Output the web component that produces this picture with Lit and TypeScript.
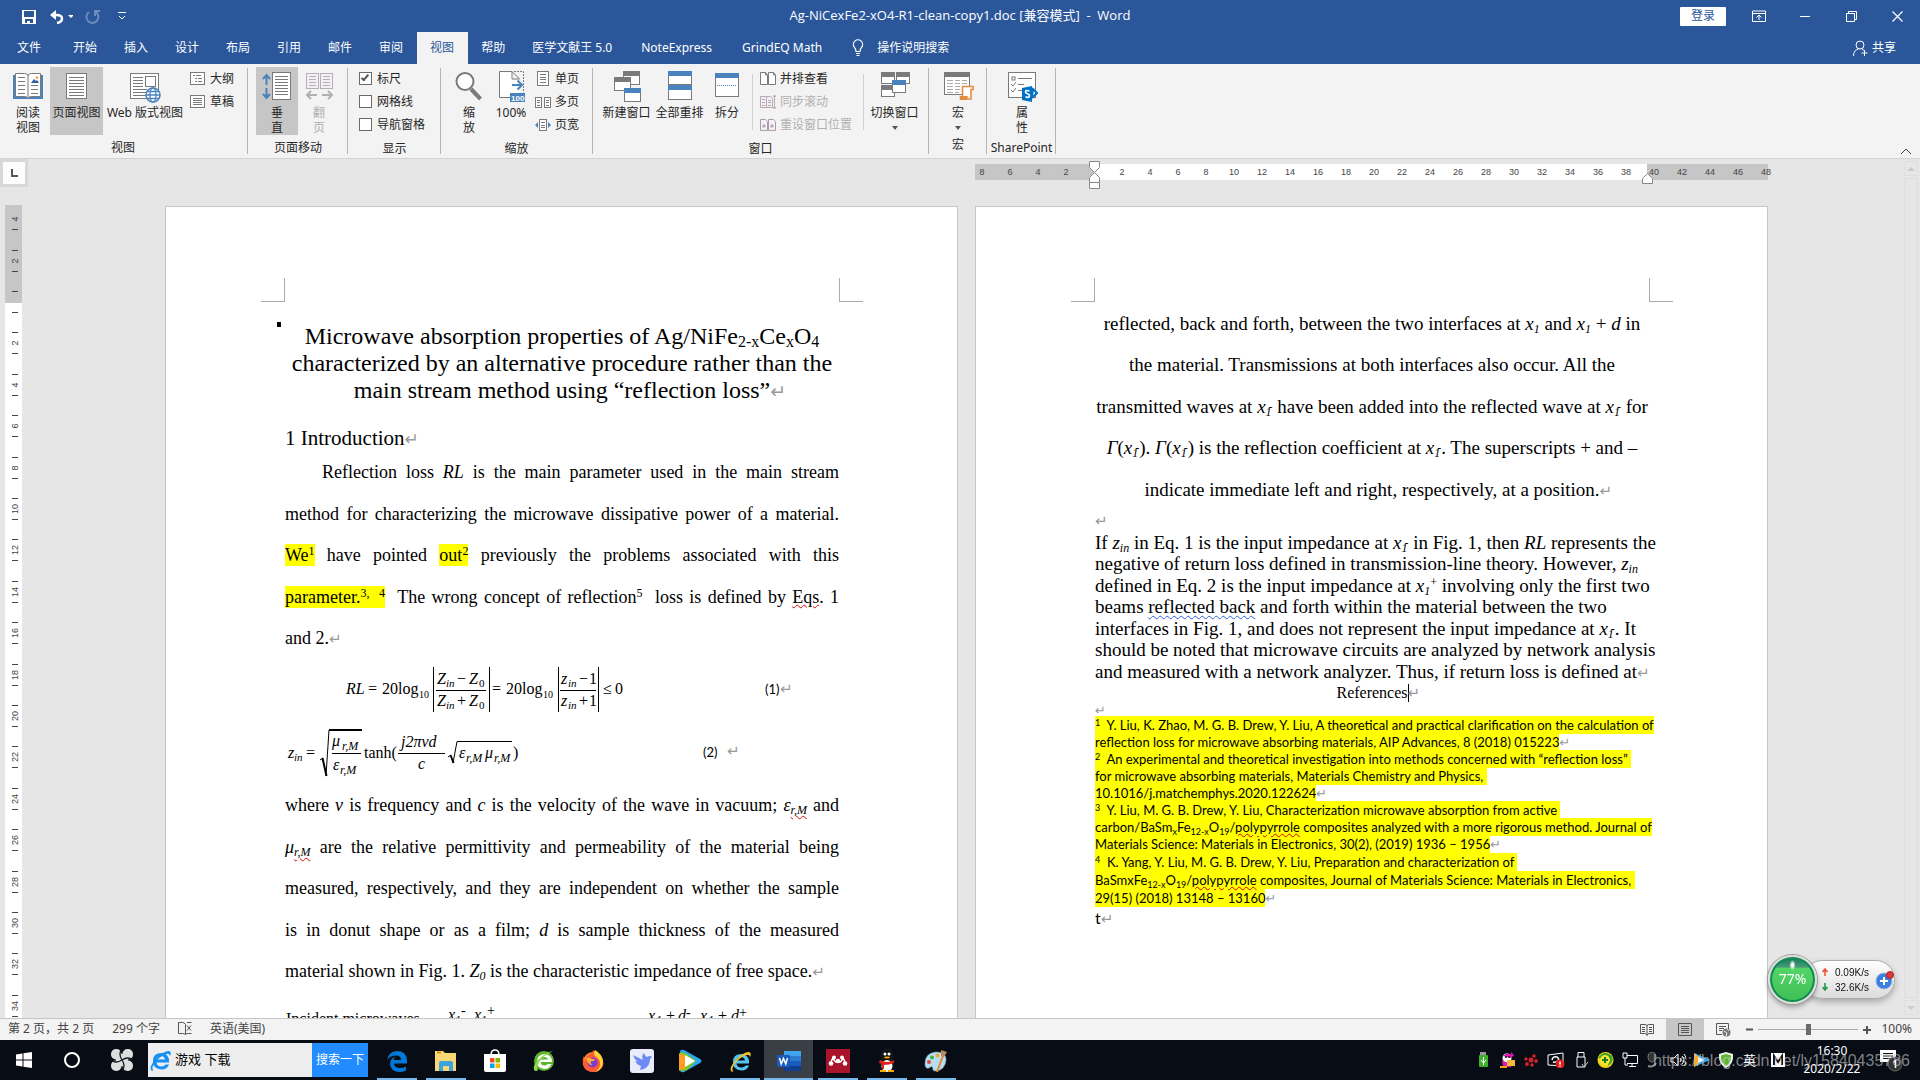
import { LitElement, html, svg, css, nothing, TemplateResult } from "lit";
import { customElement, state } from "lit/decorators.js";
import { classMap } from "lit/directives/class-map.js";

type Tpl = TemplateResult | typeof nothing;

const icon = (w: number, h: number, body: unknown, cls = "") =>
  html`<svg class=${cls} width=${w} height=${h} viewBox="0 0 ${w} ${h}" fill="none" aria-hidden="true">${body}</svg>`;

const G = "#7a7a7a";
const B = "#4a82bd";

/* horizontal text rules inside a sheet icon */
const rules = (x1: number, x2: number, ys: number[], c = G) =>
  svg`${ys.map((y) => svg`<path d="M${x1} ${y}.5H${x2}" stroke=${c} />`)}`;

const windowShape = (x: number, y: number, w: number, h: number, bar: string) =>
  svg`<rect x=${x + 0.5} y=${y + 0.5} width=${w - 1} height=${h - 1} fill="#fff" stroke=${G} /><rect x=${x} y=${y} width=${w} height="5" fill=${bar} />`;

const big = {
  read: icon(32, 32, svg`<path d="M1 4h30v24H1z" fill=${B}/><path d="M3.500 2.500h9q3 0 3.500 2 .5-2 3.500-2h9v23h-9q-3 0-3.500 2-.5-2-3.500-2h-9z" fill="#fff" stroke=${G}/><path d="M16 4v22" stroke=${G}/>${rules(6, 13, [6, 10, 14, 18, 22])}${rules(19, 26, [14, 18, 22])}<path d="M19 5h8v7h-8z" fill="#fff"/><path d="M19 12l3-4 2 2 1-1 2 3z" fill="#2b5f9e"/><circle cx="25" cy="6.500" r="1.500" fill="#f0b060"/>`),
  page: icon(32, 32, svg`<rect x="5.500" y="2.500" width="20" height="25" fill="#fff" stroke=${G}/>${rules(8, 23, [6, 9, 12, 15, 18, 21, 24])}`),
  web: icon(32, 32, svg`<rect x="1.500" y="2.500" width="28" height="25" fill="#fff" stroke=${G}/>${rules(4, 14, [6, 9, 12, 15])}${rules(4, 18, [18, 21, 24])}<rect x="16.500" y="5.500" width="10" height="10" fill="#fff" stroke=${G}/><circle cx="24" cy="24" r="7" fill="#fff" stroke=${B} stroke-width="1.500"/><ellipse cx="24" cy="24" rx="3" ry="7" stroke=${B} stroke-width="1.300"/><path d="M17 24h14M18 20.500h12M18 27.500h12" stroke=${B} stroke-width="1.300"/>`),
  vertical: icon(32, 32, svg`<rect x="11.500" y="1.500" width="18" height="27" fill="#fff" stroke=${G}/>${rules(14, 27, [5, 8, 11, 14, 17, 20, 23])}<path d="M5.500 4v10M5.500 17v10M2 8l3.500-4L9 8M2 23l3.500 4L9 23" stroke=${B} stroke-width="2"/>`),
  flip: icon(32, 32, svg`<rect x="3.500" y="2.500" width="12" height="15" fill="#f5eff5" stroke="#b5b0b5"/><rect x="17.500" y="2.500" width="12" height="15" fill="#f5eff5" stroke="#b5b0b5"/>${rules(6, 13, [5, 8, 11, 14], "#b5b0b5")}${rules(20, 27, [5, 8, 11, 14], "#b5b0b5")}<path d="M5 24h9M19 24h9M8 20l-4 4 4 4M25 20l4 4-4 4" stroke="#b0b0b0" stroke-width="2"/>`),
  zoom: icon(32, 32, svg`<path d="M18 18l9.500 10" stroke=${G} stroke-width="4"/><circle cx="12" cy="10.500" r="8.500" fill="#fff" stroke=${G} stroke-width="2"/>`),
  hundred: icon(32, 32, svg`<path d="M4.500 1.500h13v7h7v18h-20z" fill="#fff"/><path d="M15 26.500H4.500v-26H17v7.500h7.500" stroke=${G}/><path d="M17 .5l7.500 7.500" stroke=${G}/><path d="M19 .5h9.500v21" stroke=${G} stroke-dasharray="2 1"/><path d="M17 14h9M22.500 9.500l4.500 4.500-4.500 4.500" stroke=${B} stroke-width="2"/><rect x="15" y="22" width="15" height="9" fill=${B}/><text x="16" y="29.500" font-size="8" font-weight="700" fill="#fff" font-family="Liberation Sans, sans-serif">100</text>`),
  newWin: icon(32, 32, svg`${windowShape(12, 0, 17, 14, G)}${windowShape(3, 6, 17, 14, G)}${windowShape(13, 17, 17, 14, B)}`),
  arrange: icon(32, 32, svg`${windowShape(4, 0, 24, 14, B)}${windowShape(4, 14, 24, 15, B)}`),
  split: icon(32, 32, svg`${windowShape(4, 2, 24, 24, B)}<path d="M6 14.500h20" stroke=${B} stroke-dasharray="1 1"/>`),
  switchWin: icon(32, 32, svg`${windowShape(2, 1, 14, 12, G)}${windowShape(17, 1, 14, 12, G)}${windowShape(2, 14, 14, 12, G)}${windowShape(13, 9, 14, 13, B)}`),
  macro: icon(32, 32, svg`${windowShape(2, 1, 26, 23, G)}<path d="M5 9.500h6M13 9.500h5M20 9.500h5M5 12.500h6M13 12.500h5M20 12.500h5M5 15.500h6M13 15.500h5M5 18.500h6M13 18.500h5M5 21.500h6M13 21.500h4" stroke="#aaa"/><path d="M20.500 26V15.500H31v3h-2V28H18.500v-2H26" fill="#fff" stroke="#e68a3e" stroke-width="1.600"/><path d="M18 25h7v4h-7z" fill="#e68a3e"/>`),
  prop: icon(32, 32, svg`<rect x="2.500" y="1.500" width="27" height="25" fill="#fff" stroke=${G}/><rect x="6" y="6" width="3" height="3" stroke=${G}/><path d="M12 7.500h14M12 13.500h6M12 19.500h4M5 13l2 2 3-4M5 19l2 2 3-4" stroke=${G}/><path d="M26 17l5 5-5 5M27 18l-1 8" stroke="#0072c6" stroke-width="2"/><path d="M16 17l10-2v16l-10-2z" fill="#0072c6"/><path d="M23.500 20q-4-1.500-4 1 0 1.200 2 1.800t2 2q0 2.500-4 1" stroke="#fff" stroke-width="1.600"/>`),
};

const small = {
  outline: icon(16, 16, svg`<rect x=".5" y="1.500" width="14" height="12" fill="#fff" stroke=${G}/><path d="M3 4.500h2M6 4.500h5M5 7.500h2M8 7.500h4M5 10.500h2M8 10.500h4" stroke=${G}/>`),
  draft: icon(16, 16, svg`<rect x=".5" y="1.500" width="14" height="12" fill="#fff" stroke=${G}/>${rules(3, 12, [4, 6, 8, 10])}`),
  one: icon(16, 16, svg`<rect x="2.500" y=".5" width="11" height="14" fill="#fff" stroke=${G}/>${rules(5, 11, [3, 6, 8, 11])}`),
  many: icon(16, 16, svg`<rect x=".5" y="3.500" width="6" height="10" fill="#fff" stroke=${G}/><rect x="9.500" y="3.500" width="6" height="10" fill="#fff" stroke=${G}/>${rules(2, 5, [6, 8, 11])}${rules(11, 14, [6, 8, 11])}`),
  width: icon(16, 16, svg`<rect x="4.500" y="2.500" width="7" height="11" fill="#fff" stroke=${G}/>${rules(6, 10, [5, 8, 10])}<path d="M3 5v6L0 8zM13 5v6l3-3z" fill=${B}/>`),
  side: icon(16, 16, svg`<path d="M.5 1.500h5l2 2v10h-7zM8.500 1.500h5l2 2v10h-7z" fill="#fff" stroke=${G}/><path d="M5.500 1.500v2.500h2M13.500 1.500v2.500h2" stroke=${G}/>`),
  sync: icon(16, 16, svg`<path d="M.5 2.500h6v11h-6zM6.500 2.500h4l2 2v9h-6z" fill="#f5eff5" stroke="#b5aab5"/>${rules(2, 5, [5, 8, 11], "#b5aab5")}${rules(8, 11, [6, 8, 11], "#b5aab5")}<path d="M14.500 1v14M13 3l1.500-2L16 3M13 13l1.500 2 1.500-2" stroke="#b5aab5"/>`),
  reset: icon(16, 16, svg`<path d="M.5 2.500h5l2 2v9h-7zM8.500 2.500h5l2 2v9h-7z" fill="#f5eff5" stroke="#a89da8"/><path d="M2 9h4M4 7v4M10 9h4M12 7v4" stroke="#a89da8"/>`),
};

const TABS = ["开始", "插入", "设计", "布局", "引用", "邮件", "审阅", "视图", "帮助", "医学文献王 5.0", "NoteExpress", "GrindEQ Math"];

/* document runs */
const ret = html`<span class="ret">↵</span>`;
const sub = (t: string) => html`<sub>${t}</sub>`;
const sup = (t: string) => html`<sup>${t}</sup>`;
const i = (t: string) => html`<i>${t}</i>`;
const x1 = html`<i>x<sub>1</sub></i>`;
const x1m = html`<i>x<sub>1</sub></i><sup class="tuck">-</sup>`;
const zin = html`<i>z<sub>in</sub></i>`;
const rM = html`<i><sub class="err">r,M</sub></i>`;
const ln = (c: unknown, cls = "") => html`<span class="ln ${cls}">${c}</span>`;
const hl = (c: unknown) => html`<mark>${c}</mark>`;

const it = (x: number, y: number, t: string, s = 16) =>
  svg`<text x=${x} y=${y} font-size=${s} font-style="italic">${t}</text>`;
const up = (x: number, y: number, t: string, s = 16) => svg`<text x=${x} y=${y} font-size=${s}>${t}</text>`;

const eq1 = html`<svg class="eq" width="554" height="63" viewBox="0 2 554 63" role="img" aria-label="Equation 1">
  ${it(61, 37, "RL")}${up(83, 37, "=")}${up(97, 37, "20log")}${up(134, 41, "10", 10)}
  <path d="M148.500 10v45M204.500 10v45M151 33.500h50M273.500 10v45M313.500 10v45M275 33.500h36" stroke="#000" />
  ${it(152, 27, "Z")}${it(161, 30, "in", 11)}${up(172, 27, "−")}${it(184, 27, "Z")}${up(194, 30, "0", 11)}
  ${it(152, 49, "Z")}${it(161, 52, "in", 11)}${up(172, 49, "+")}${it(184, 49, "Z")}${up(194, 52, "0", 11)}
  ${up(207, 37, "=")}${up(221, 37, "20log")}${up(258, 41, "10", 10)}
  ${it(276, 27, "z")}${it(283, 30, "in", 11)}${up(294, 27, "−")}${up(304, 27, "1")}
  ${it(276, 49, "z")}${it(283, 52, "in", 11)}${up(294, 49, "+")}${up(304, 49, "1")}
  ${up(318, 37, "≤")}${up(330, 37, "0")}
  <text class="lato" x="480" y="37" font-size="13">(1)</text><text class="mark" x="495" y="37" font-size="13">↵</text>
</svg>`;

const eq2 = html`<svg class="eq" width="554" height="63" viewBox="0 0 554 63" role="img" aria-label="Equation 2">
  ${it(3, 36, "z")}${it(9, 39, "in", 11)}${up(21, 36, "=")}
  <path d="M35 38l3-2M41 54l3-46" stroke="#000" /><path d="M37.500 36l4 18M44 8h33" stroke="#000" stroke-width="2" />
  ${it(47, 24, "μ")}${it(57, 28, "r,M", 12)}${it(48, 48, "ε")}${it(55, 52, "r,M", 12)}
  <path d="M47 31.500h29M113 31.500h47" stroke="#000" />
  ${up(79, 36, "tanh(")}${it(116, 25, "j2πνd")}${it(133, 47, "c")}
  <path d="M163 35l3-2M168 41l4-21.500H227" stroke="#000" /><path d="M165.500 33l3 8" stroke="#000" stroke-width="2" />
  ${it(174, 36, "ε")}${it(181, 40, "r,M", 12)}${it(200, 36, "μ")}${it(209, 40, "r,M", 12)}${up(228, 36, ")")}
  <text class="lato" x="418" y="35" font-size="13">(2)</text><text class="mark" x="442" y="34" font-size="17">↵</text>
</svg>`;

const figure = html`<svg class="eq" width="554" height="80" viewBox="0 0 554 80" role="img" aria-label="Figure 1">
  ${up(1, 32, "Incident microwaves")}
  ${it(163, 28, "x")}${it(170, 32, "1", 12)}${up(176, 23, "-", 14)}${it(189, 28, "x")}${it(196, 32, "1", 12)}${up(202, 23, "+", 14)}
  ${it(363, 29, "x")}${it(371, 32, "1", 12)}${up(381, 29, "+")}${it(393, 29, "d")}${up(401, 25, "-", 14)}
  ${it(415, 29, "x")}${it(423, 32, "1", 12)}${up(433, 29, "+")}${it(446, 29, "d")}${up(454, 25, "+", 14)}
</svg>`;

/* taskbar pictures */
const ieShape = (ring: string, body: string) => svg`<path d="M21 14.500H8.500q.5 4 5 4 3 0 4-2h3.500q-2 5-7.500 5Q5 21 5 13t8.500-8q8 .5 7.500 9.500zM8.500 11.500h8.500q-.5-3.500-4-3.500t-4.500 3.500z" fill=${body}/><path d="M3 22q-2-3 4-10 8-9 14-9 3 1 1 5-.5-3.500-5-1.500Q10 9.500 6 16q-3 5-.5 6-1.500 1.500-2.500 0z" fill=${ring}/>`;

const apps: { name: string; pic: Tpl; open?: boolean; active?: boolean }[] = [
  { name: "Edge", open: true, pic: icon(24, 24, svg`<path d="M2 11Q4 2 12.500 2 22 2.500 22 12v2.500H9q.5 4.500 6 4.500 3.500 0 6-1.500v4Q18 23 14 23 5.500 22.500 5 14.500 5.500 9 11 7.500 8.500 9 8.500 11h7.500q0-4.500-5-4.500Q5 6.500 2 11z" fill="#0078d7"/>`) },
  { name: "Explorer", open: true, pic: icon(24, 24, svg`<path d="M1 2h8l2 2h11v18H1z" fill="#f8d775"/><path d="M3 3.500h4" stroke="#d08a20" stroke-width="2"/><path d="M5 22v-8q0-2 2-2h10q2 0 2 2v8h-4v-5H9v5z" fill="#3ba4e0"/>`) },
  { name: "Store", pic: icon(24, 24, svg`<path d="M8 6q0-5 4-5t4 5" stroke="#fff" stroke-width="1.500"/><path d="M1 5h22v16q0 2-2 2H3q-2 0-2-2z" fill="#fff"/><path d="M7 9h4.500v4.500H7z" fill="#f25022"/><path d="M12.500 9H17v4.500h-4.500z" fill="#7fba00"/><path d="M7 14.500h4.500V19H7z" fill="#00a4ef"/><path d="M12.500 14.500H17V19h-4.500z" fill="#ffb900"/>`) },
  { name: "360", pic: icon(24, 24, svg`<circle cx="12" cy="12" r="10" fill="#5cb52a"/><path d="M20 13H8.500q.5 3.500 4 3.500 2 0 3-1.500h4q-2 5-7 5Q5 19.500 5 12.500T12.500 5Q20 5.500 20 13zM8.500 10.500H16Q15.500 8 12.500 8t-4 2.500z" fill="#fff"/><path d="M2 21Q0 16 9 8q8-6 12-6-9 4-13 10-4 5-2 9-2 2-4 0z" fill="#8edb4a"/>`) },
  { name: "Firefox", pic: icon(24, 24, svg`<circle cx="12" cy="13" r="10" fill="#ff9a1f"/><path d="M3 7q0 4 1 6 0-7 5-8 3-3 4-4 0 3 4 5 7 5 5 11-3 6-10 6-8 0-10-7Q1 10 3 7z" fill="#ff5a36"/><path d="M14 1q7 4 8 11 0 9-8 11 6-4 5-10-1-4-5-6-2-3 0-6z" fill="#ffd43a"/><circle cx="11.500" cy="13.500" r="5" fill="#7a3bd0"/><path d="M5 9q4-1 6 1 3 0 3 1-2 2-4 1-1 3 2 4-5 1-7-7z" fill="#ffb02e"/>`) },
  { name: "Bird", pic: icon(24, 24, svg`<rect width="24" height="24" rx="3" fill="#e9ecfb"/><path d="M3 6l10 5q-2-4 1-7 1 3 3 4 3-2 5 0l-2 2q0 7-6 10l-4 1 1-4q-4-1-6-5l3 1Q4 10 3 6z" fill="#6c8af2"/>`) },
  { name: "Player", pic: icon(24, 24, svg`<path d="M1 3q0-3 4-2l16 9q3 2 0 4L5 23q-4 1-4-2z" fill="#2aa7f5"/><path d="M1 4q3-2 8 2l7 5q1 1 0 2l-8 8q-4 2-7 0z" fill="#82c91e"/><path d="M0 4l6 3v12l-6 3z" fill="#ff9d1e"/><path d="M6 6l10 6-10 6z" fill="#fff"/>`) },
  { name: "Internet Explorer", open: true, pic: icon(24, 24, ieShape("#f5c52c", "#55c5f0")) },
  { name: "Word", open: true, active: true, pic: icon(26, 24, svg`<path d="M8 2h17v5H8z" fill="#41a5ee"/><path d="M8 7h17v5H8z" fill="#2b7cd3"/><path d="M8 12h17v5H8z" fill="#185abd"/><path d="M8 17h17v5H8z" fill="#103f91"/><rect x="1" y="6" width="13" height="12" rx="1" fill="#185abd"/><path d="M3.500 9l1.700 6L7.500 9.500 9.800 15l1.700-6" stroke="#fff" stroke-width="1.500"/>`) },
  { name: "Mendeley", open: true, pic: icon(24, 24, svg`<path d="M0 0h24v24H0z" fill="#a9142c"/><path d="M5 15q0-4 2-6 2 5 5 4 3 1 5-4 2 2 2 6" stroke="#fff" stroke-width="1.600"/><circle cx="8" cy="8.500" r="2" fill="#fff"/><circle cx="12" cy="12" r="2.300" fill="#fff"/><circle cx="16" cy="8.500" r="2" fill="#fff"/><circle cx="5" cy="14.500" r="2.300" fill="#fff"/><circle cx="19" cy="14.500" r="2.300" fill="#fff"/>`) },
  { name: "QQ", open: true, pic: icon(24, 24, svg`<ellipse cx="12" cy="13" rx="8" ry="9" fill="#111"/><ellipse cx="12" cy="6" rx="5.500" ry="6" fill="#111" stroke="#333" stroke-width=".5"/><ellipse cx="12" cy="17" rx="5.500" ry="6" fill="#fff"/><path d="M5 11q7 4 14 0v3q-5 2-10 2v4H7v-5l-3-1z" fill="#e2231a"/><circle cx="10" cy="5" r="1.500" fill="#fff"/><circle cx="14" cy="5" r="1.500" fill="#fff"/><ellipse cx="12" cy="8.500" rx="3" ry="1" fill="#f6a800"/><path d="M5 22h6M13 22h6" stroke="#f6a800" stroke-width="2"/>`) },
  { name: "Paint", open: true, pic: icon(24, 24, svg`<path d="M1 15Q1 4 12 3q10 0 10 8-1 10-10 11-4 0-3-3-1-3-4 0-4 1-4-4z" fill="#b9ddf0" stroke="#7fb2cc" stroke-width=".6"/><circle cx="5" cy="13" r="2" fill="#e04a3a"/><circle cx="8" cy="8.500" r="2" fill="#3fae49"/><circle cx="13.500" cy="6.500" r="2" fill="#f3a32b"/><path d="M20 4l-7 19" stroke="#e08a2c" stroke-width="2"/><path d="M17 1l6 2-3 5-3-1z" fill="#b98a5c"/>`) },
];

const tray: Tpl[] = [
  icon(16, 16, svg`<path d="M5 0h6v4H5z" fill="#999"/><rect x="4" y="3" width="9" height="12" rx="1" fill="#3fae2a"/><path d="M8.500 5v8M6 8l2.500 3L11 8" stroke="#fff"/>`),
  icon(16, 16, svg`<circle cx="8" cy="6" r="4.500" fill="#fff"/><path d="M4 4q4-4 8-1v-3l3 3-3 3z" fill="#e615b8"/><path d="M3 8q5 4 10 1l-1 6H4z" fill="#e615b8"/><rect x="8" y="8" width="8" height="6" fill="#f6b93b"/><path d="M1 15h7" stroke="#f6a800" stroke-width="2"/><circle cx="7" cy="5" r="1" fill="#111"/><circle cx="10" cy="5" r="1" fill="#111"/>`),
  icon(16, 16, svg`<g fill="#d3222a"><circle cx="8" cy="8" r="2.500"/><circle cx="3" cy="7" r="1.700"/><circle cx="11" cy="4" r="1.800"/><circle cx="13" cy="9" r="1.900"/><circle cx="4" cy="12" r="2"/><circle cx="9" cy="13" r="1.800"/></g>`),
  icon(18, 16, svg`<path d="M1 3l15-2v13l-15-1z" stroke="#fff"/><path d="M5 8q1-4 5-3l2 2M12 7q-2 4-6 3" stroke="#fff" stroke-width="1.400"/><circle cx="13" cy="12" r="4.500" fill="#e02020"/><path d="M13 9.500v3M13 13.500v1.200" stroke="#fff" stroke-width="1.500"/>`),
  icon(16, 16, svg`<path d="M5 5V.5h6V5" stroke="#fff"/><path d="M4 5h8v10H4z" stroke="#fff"/><path d="M9 12l2 3 4-5" stroke="#ccc"/>`),
  icon(17, 16, svg`<circle cx="8.500" cy="8" r="8" fill="#f2d31b"/><path d="M1 6q6-9 14-2 2 6-4 10 2-8-10-8z" fill="#35a02a"/><circle cx="8" cy="8" r="5" fill="#f7e23a"/><path d="M8 5v6M5 8h6" stroke="#1d7a1d" stroke-width="2"/>`),
  icon(16, 16, svg`<path d="M1 1h4v5H1zM3 6v7h3M5 3.500h10.500v8H5M10 12v2.500M7 14.500h7" stroke="#fff"/>`),
  icon(16, 16, svg`<ellipse cx="6" cy="5" rx="4" ry="5" fill="#333" stroke="#777"/><path d="M2 14q5 2 8-3" stroke="#888" stroke-width="2"/>`),
  icon(16, 16, svg`<path d="M1 6h3l4-4v12l-4-4H1zM10 6q2 2 0 4M12 4q4 4 0 8M14 2q5 6 0 12" stroke="#fff"/>`),
  icon(16, 16, svg`<path d="M0 1l16 7-16 7z" fill="#2aa7f5"/><path d="M0 1l9 7-9 7z" fill="#f9a825"/><path d="M4 5l6 3-6 3z" fill="#fff"/>`),
  icon(16, 16, svg`<path d="M8 0l7 2q1 10-7 14Q0 12 1 2z" fill="#eef5ea"/><path d="M8 2l5 1.500Q13.500 11 8 14 2.500 11 3 3.500z" fill="#5cb52a"/>`),
];

@customElement("app-root")
export class AppRoot extends LitElement {
  @state() private tab = "视图";

  static styles = css`
    :host { display: flex; flex-direction: column; height: 100vh; overflow: hidden; background: #e6e6e6; color: #262626;
      font: 12px/16px "Noto Sans", "Noto Sans CJK SC", sans-serif; }
    *, *::before { box-sizing: border-box; }
    button { font: inherit; color: inherit; background: none; border: 0; padding: 0; margin: 0; white-space: nowrap; }
    svg { display: block; flex: none; }
    .row { display: flex; align-items: center; }

    .titlebar { display: grid; grid-template-columns: 1fr auto 1fr; align-items: center; height: 32px; background: #2b579a; color: #fff; }
    .qat { gap: 10px; padding: 2px 0 0 21px; }
    .doc-name { white-space: pre; padding-bottom: 3px; font: 13px/18px "Open Sans", "Noto Sans CJK SC", sans-serif; }
    .win { justify-content: flex-end; }
    .win .sys { width: 46px; height: 30px; display: grid; place-items: center; }
    .login { width: 46px; height: 19px; margin-right: 10px; background: #fff; color: #2b579a; border-radius: 1px; }

    .tabs { height: 32px; background: #2b579a; color: #fff; }
    .tabs .tab { height: 32px; padding: 0 14px 0 13px; }
    .tabs .tab:nth-of-type(n + 12) { padding: 0 15px; }
    .tabs .file { width: 60px; padding: 0 2px 0 0; }
    .tabs .tab.on { background: #f3f3f3; color: #2b579a; }
    .tell { gap: 13px; padding: 0 0 0 15px; }
    .share { gap: 4px; margin-left: auto; padding: 0 24px 0 0; }

    .ribbon { display: flex; height: 95px; padding-top: 3px; background: #f3f3f3; border-bottom: 1px solid #d2d2d2; }
    .group { position: relative; display: flex; flex-direction: column; }
    .group::after { content: ""; position: absolute; right: 0; top: 1px; height: 86px; width: 1px; background: #b5b5b5; }
    .tools { display: flex; height: 69px; }
    .label { flex: 1; text-align: center; line-height: 26px; }
    .g-view { width: 248px; padding-left: 6px; } .g-move { width: 100px; padding-left: 8px; } .g-show { width: 93px; }
    .g-zoom { width: 152px; padding-left: 7px; } .g-window { width: 336px; padding-left: 7px; }
    .g-macro { width: 58px; padding-left: 8px; } .g-share { width: 69px; padding-left: 14px; }
    .g-view .label, .g-move .label, .g-zoom .label, .g-macro .label, .g-window .label { margin-left: -8px; }
    .g-share .label { margin-left: -14px; }
    .big { display: flex; flex-direction: column; align-items: center; gap: 2px; padding-top: 4px; line-height: 15px; text-align: center; min-width: 42px; }
    .big.on { background: #c6c6c6; }
    .w44 { width: 44px; } .w53 { width: 53px; } .w84 { width: 84px; }
    .off { color: #b0b0b0; }
    .drop { border: 3px solid transparent; border-top: 4px solid #555; border-bottom: 0; margin-top: 4px; }
    .stack { display: flex; flex-direction: column; padding-left: 3px; }
    .stack .small, .check { display: flex; align-items: center; gap: 4px; height: 23px; text-align: left; }
    .check { gap: 5px; padding-left: 11px; white-space: nowrap; }
    .check input { appearance: none; width: 13px; height: 13px; margin: 0; border: 1px solid #6a6a6a; background: #fff; }
    .check input:checked { position: relative; }
    .check input:checked::before { content: ""; position: absolute; left: 3px; top: 0; width: 4px; height: 8px; border: solid #555; border-width: 0 2px 2px 0; transform: rotate(40deg); }
    .vsep { width: 1px; height: 56px; margin: 7px 4px 0; background: #d0d0d0; }
    .vsep.far { margin-left: 11px; }
    .collapse { margin: auto 8px 0 auto; padding-bottom: 3px; }

    .work { flex: 1; min-height: 0; display: grid; grid-template: 46px 1fr / 26px 1fr 16px; }
    .corner { width: 28px; height: 28px; padding: 3px; background: #d8d8d8; }
    .corner button { display: grid; place-items: center; width: 22px; height: 22px; background: #fdfdfd; }
    .spread { display: grid; grid-template-columns: repeat(2, 793px); gap: 17px; justify-content: center; padding-left: 3px; min-height: 0; }
    .hruler { position: relative; grid-column: 2; display: flex; align-self: start; margin-top: 5px; height: 16px; background: linear-gradient(90deg, #c6c6c6 120px, #fff 120px 672px, #c6c6c6 672px); font: 9px/17px "Liberation Sans", sans-serif; color: #444; }
    .hruler .nums { display: flex; margin-left: -7px; }
    .hruler .nums span { width: 28px; flex: none; text-align: center; }
    .pin { position: absolute; top: -3px; left: 114px; } .pin.right { left: 667px; top: 9px; }
    .vruler { padding-left: 5px; overflow: hidden; }
    .vruler text { font: 9px "Liberation Sans", sans-serif; fill: #444; }
    .scroll { display: flex; flex-direction: column; gap: 2px; padding: 2px 2px 3px 0; grid-row: 1 / 3; grid-column: 3; }
    .scroll div { flex: 1; border: 1px solid #dedede; }
    .scroll button { height: 15px; border: 1px solid #dedede; display: grid; place-items: center; }

    .page { position: relative; min-width: 0; overflow: hidden; margin-top: 1px; background: #fff; border: 1px solid #c6c6c6; border-bottom: 0; padding: 96px 118px 0 119px;
      font-family: "Liberation Serif", "Noto Sans CJK SC", serif; color: #000; }
    .crop { position: absolute; top: 71px; width: 24px; height: 24px; border-bottom: 1px solid #aaa; }
    .crop.l { left: 95px; border-right: 1px solid #aaa; } .crop.r { right: 94px; border-left: 1px solid #aaa; }
    .page p, .page h1, .page h2 { margin: 0; font-weight: 400; }
    .ln { display: block; white-space: nowrap; }
    .title { position: relative; padding-top: 20px; font-size: 24px; line-height: 27px; text-align: center; }
    .title::before { content: ""; position: absolute; left: -8px; top: 19px; width: 4px; height: 5px; background: #000; }
    .h2 { padding: 23px 0 3px; font-size: 21px; line-height: 22px; }
    .body { font-size: 18px; line-height: 41px; } .body .ln:nth-child(even) { line-height: 42px; }
    .just { text-align-last: justify; }
    .ind { padding-left: 37px; }
    .mid { text-align: center; font-size: 19px; }
    .compact { font-size: 19px; line-height: 21px; } .compact .ln:nth-child(even) { line-height: 22px; }
    .refhead { font-size: 16px; line-height: 22px; text-align: center; }
    .caret { display: inline-block; width: 1px; height: 18px; margin: 0 -1px 0 0; background: #000; vertical-align: -4px; }
    .refs { font: 13px/17px Lato, "Noto Sans CJK SC", sans-serif; }
    .refs .ln:nth-child(n + 9) { line-height: 18px; }
    .refs mark { padding: 1px 0; }
    .tail { font: 16px/22px Lato, sans-serif; }
    .blank { font-size: 16px; line-height: 22px; } .blank.s { font-size: 13px; line-height: 13px; }
    sub, sup { font-size: 12px; line-height: 0; } sub { vertical-align: -3px; } sup { vertical-align: 6px; }
    .title sub { font-size: 16px; }
    .refs sub, .refs sup { font-size: 9px; } .refs sup { vertical-align: 4px; }
    .tuck { vertical-align: 2px; margin-left: -3px; }
    mark { background: #ff0; color: inherit; }
    .body mark { padding: 1px 0; }
    .err { text-decoration: underline wavy #e00000 1px; text-underline-offset: 1px; }
    .refs .err { position: relative; z-index: 1; }
    .gram { text-decoration: underline wavy #3060d8 1px; text-underline-offset: 2px; }
    .ret, .mark { color: #999; fill: #999; font-family: "DejaVu Sans", sans-serif; font-size: 15px; line-height: 0; }
    .ret { display: inline-block; width: 0; text-align-last: left; }
    .title .ret { font-size: 19px; } .h2 .ret { font-size: 17px; } .refs .ret, .blank.s .ret { font-size: 13px; }
    .eq { font-family: "Liberation Serif", serif; fill: #000; } .eq path { fill: none; } .eq .lato { font-family: Lato, sans-serif; }

    .status { height: 22px; flex: none; background: #f3f3f3; border-top: 1px solid #c6c6c6; padding: 0 8px 0 8px; color: #444; }
    .status .left { gap: 18px; white-space: nowrap; padding-bottom: 2px; }
    .status .right { margin-left: auto; }
    .status .right button { width: 38px; height: 21px; display: grid; place-items: center; }
    .status .right .on { background: #c6c6c6; }
    .status .right .step { width: 15px; }
    .range { appearance: none; width: 100px; height: 20px; margin: 0 1px; background: linear-gradient(#aaa 0 0) center / 100% 1px no-repeat; }
    .range::-webkit-slider-thumb { appearance: none; width: 5px; height: 11px; background: #6b6b6b; }
    .pct { width: 38px; text-align: right; font-size: 12px; padding-bottom: 1px; }

    .taskbar { position: relative; height: 40px; flex: none; background: #070c15; color: #fff; }
    .taskbar button { display: grid; place-items: center; }
    .start { width: 48px; height: 40px; margin-right: 1px; }
    .search { display: flex; align-items: center; width: 220px; height: 34px; margin: 0 4px 0 1px; background: #ededed; }
    .search input { flex: 1; min-width: 0; height: 30px; border: 0; background: none; padding: 0 0 4px 3px; font: 13px "Noto Sans", "Noto Sans CJK SC", sans-serif; color: #000; outline: 0; }
    .search button { width: 56px; height: 34px; background: #218bff; font-size: 12px; }
    .app { width: 49px; height: 40px; padding-top: 1px; }
    .app.open { background: linear-gradient(#76b9ed 0 0) center bottom / 40px 2px no-repeat; }
    .app.active { background: linear-gradient(#76b9ed 0 0) center bottom / 49px 2px no-repeat, #3a3f46; }
    .tray { margin-left: auto; padding-right: 10px; }
    .icons { gap: 8px; }
    .ime { gap: 15px; margin-left: 9px; font-size: 13px; }
    .clock { width: 76px; margin-left: 9px; text-align: center; line-height: 18px; }
    .notif { width: 40px; }
    .water { position: absolute; right: 10px; top: 11px; font: 16px/20px "Liberation Sans", sans-serif; color: rgba(205, 205, 205, 0.62); white-space: nowrap; }

    .meter { position: fixed; right: 25px; bottom: 76px; display: flex; align-items: center; width: 127px; height: 49px; color: #111; line-height: 15px; }
    .meter .pill { display: flex; align-items: center; gap: 6px; margin-left: -14px; padding: 0 4px 0 18px; height: 39px; flex: 1; min-width: 0; border: 1px solid #aaa; border-radius: 20px; background: linear-gradient(#fff, #dcdcdc); box-shadow: 0 3px 6px #0004; }
    .rates { display: grid; grid-template-columns: 6px auto; column-gap: 7px; align-items: center; white-space: nowrap; font: 10px/15px "Liberation Sans", sans-serif; }
    .ball { z-index: 1; flex: none; width: 49px; height: 49px; border-radius: 50%; border: 2px solid #ddd; box-shadow: 0 0 0 1px #999, inset 0 0 0 2px #0f8a52, 0 3px 5px #0005; background: radial-gradient(ellipse at 50% 18%, #fff 0 3%, #0000 10%), linear-gradient(#0d7a50 0, #4a9a7c 23%, #52d567 24%, #3fbf55); color: #fff; text-align: center; font-size: 14px; line-height: 43px; }
  `;

  private big(pic: Tpl, label: unknown, cls = "", drop = false) {
    return html`<button class="big ${cls}" ?disabled=${cls.includes("off")}>${pic}<span>${label}</span>${drop ? html`<span class="drop"></span>` : nothing}</button>`;
  }
  private small(pic: Tpl, label: string, cls = "") {
    return html`<button class="small ${cls}" ?disabled=${cls === "off"}>${pic}<span>${label}</span></button>`;
  }
  private group(cls: string, label: string, tools: unknown) {
    return html`<section class="group ${cls}" aria-label=${label}><div class="tools">${tools}</div><div class="label">${label}</div></section>`;
  }

  private header() {
    return html`
      <header class="titlebar">
        <div class="qat row">
          <button aria-label="保存">${icon(16, 16, svg`<path d="M1 1h14v14H1z" fill="#fff"/><path d="M3 2h10v6H3z" fill="#2b579a"/><path d="M4 10h8v4H4z" fill="#2b579a"/><path d="M6 12h3v3H6z" fill="#fff"/>`)}</button>
          <button class="row" aria-label="撤消">${icon(26, 16, svg`<path d="M10 14q5-1 5-4.500T9 6H6" stroke="#fff" stroke-width="2.500"/><path d="M3 6l6-5v10z" fill="#fff"/><path d="M21 6h6l-3 3z" fill="#fff"/>`)}</button>
          <button aria-label="重复">${icon(18, 16, svg`<path d="M6 3a6 6 0 1 0 6-.5M12 7V2h5" stroke="#6d8bbd" stroke-width="2"/>`)}</button>
          <button aria-label="自定义">${icon(26, 16, svg`<path d="M7 3.500h8M8 7l3 3 3-3" stroke="#fff"/>`)}</button>
        </div>
        <div class="doc-name">Ag-NiCexFe2-xO4-R1-clean-copy1.doc [兼容模式]  -  Word</div>
        <div class="win row">
          <button class="login">登录</button>
          <button class="sys" aria-label="功能区显示选项">${icon(14, 12, svg`<path d="M.5 1h13v10.500H.5zM.5 3.500h13M7 10V5M4.500 7.500L7 5l2.500 2.500" stroke="#fff"/>`)}</button>
          <button class="sys" aria-label="最小化">${icon(10, 10, svg`<path d="M0 5.500h10" stroke="#fff"/>`)}</button>
          <button class="sys" aria-label="还原">${icon(11, 11, svg`<path d="M.5 2.500h8v8h-8zM2.500 2.500v-2h8v8h-2" stroke="#fff"/>`)}</button>
          <button class="sys" aria-label="关闭">${icon(11, 11, svg`<path d="M.5.5l10 10M10.500.5l-10 10" stroke="#fff" stroke-width="1.200"/>`)}</button>
        </div>
      </header>
      <nav class="tabs row">
        <button class="tab file">文件</button>
        ${TABS.map((t) => html`<button class=${classMap({ tab: true, on: t === this.tab })} @click=${() => (this.tab = t)}>${t}</button>`)}
        <button class="tell row">${icon(12, 18, svg`<path d="M4 12.500Q4 10 2.500 8.500A4.600 4.600 0 1 1 9.500 8.500Q8 10 8 12.500zM4 14.500h4M4.500 16.500h3" stroke="#fff" stroke-width="1.200"/>`)}操作说明搜索</button>
        <button class="share row">${icon(15, 17, svg`<circle cx="7" cy="5" r="4" stroke="#fff"/><path d="M.5 16q0-6 5-7M9 9q1 .5 2 1.500M11.500 10v6M8.500 13h6" stroke="#fff"/>`)}共享</button>
      </nav>`;
  }

  private ribbon() {
    return html`<div class="ribbon">
      ${this.group("g-view", "视图", html`
        ${this.big(big.read, html`阅读<br />视图`, "w44")}${this.big(big.page, "页面视图", "w53 on")}${this.big(big.web, "Web 版式视图", "w84")}
        <div class="stack">${this.small(small.outline, "大纲")}${this.small(small.draft, "草稿")}</div>`)}
      ${this.group("g-move", "页面移动", html`${this.big(big.vertical, html`垂<br />直`, "on")}${this.big(big.flip, html`翻<br />页`, "off")}`)}
      ${this.group("g-show", "显示", html`<div>
        <label class="check"><input type="checkbox" checked />标尺</label>
        <label class="check"><input type="checkbox" />网格线</label>
        <label class="check"><input type="checkbox" />导航窗格</label></div>`)}
      ${this.group("g-zoom", "缩放", html`${this.big(big.zoom, html`缩<br />放`)}${this.big(big.hundred, "100%")}
        <div class="stack">${this.small(small.one, "单页")}${this.small(small.many, "多页")}${this.small(small.width, "页宽")}</div>`)}
      ${this.group("g-window", "窗口", html`${this.big(big.newWin, "新建窗口", "w53")}${this.big(big.arrange, "全部重排", "w53")}${this.big(big.split, "拆分")}
        <span class="vsep"></span>
        <div class="stack">${this.small(small.side, "并排查看")}${this.small(small.sync, "同步滚动", "off")}${this.small(small.reset, "重设窗口位置", "off")}</div>
        <span class="vsep far"></span>${this.big(big.switchWin, "切换窗口", "w53", true)}`)}
      ${this.group("g-macro", "宏", this.big(big.macro, "宏", "", true))}
      ${this.group("g-share", "SharePoint", this.big(big.prop, html`属<br />性`))}
      <button class="collapse" aria-label="折叠功能区">${icon(12, 8, svg`<path d="M1 7l5-5 5 5" stroke="#444"/>`)}</button>
    </div>`;
  }

  private vruler() {
    const marks = Array.from({ length: 20 }, (_, k) => k - 2);
    return html`<svg width="17" height="815" viewBox="0 0 17 815">
      <path d="M0 0h17v98H0z" fill="#c6c6c6" /><path d="M0 98h17v717H0z" fill="#fff" />
      ${marks.map((k) => {
        const y = Math.round(97 + k * 41.4);
        return svg`${k ? svg`<text transform="translate(13 ${y}) rotate(-90)" text-anchor="middle">${Math.abs(k * 2)}</text>` : nothing}
          ${k > -2 ? svg`<path d="M7 ${y - 10.5}h6" stroke="#444"/>` : nothing}<path d="M7 ${y + 10.5}h6" stroke="#444"/>`;
      })}
    </svg>`;
  }

  private pageOne() {
    return html`<article class="page"><span class="crop l"></span><span class="crop r"></span>
      <h1 class="title">${ln(html`Microwave absorption properties of Ag/NiFe${sub("2-x")}Ce${sub("x")}O${sub("4")}`)}${ln("characterized by an alternative procedure rather than the")}${ln(html`main stream method using “reflection loss”${ret}`)}</h1>
      <h2 class="h2">1 Introduction${ret}</h2>
      <p class="body">
        ${ln(html`Reflection loss ${i("RL")} is the main parameter used in the main stream`, "just ind")}
        ${ln("method for characterizing the microwave dissipative power of a material.", "just")}
        ${ln(html`${hl(html`We${sup("1")}`)} have pointed ${hl(html`out${sup("2")}`)} previously the problems associated with this`, "just")}
        ${ln(html`${hl(html`parameter.${sup("3,\u00a0 4")}`)}&nbsp; The wrong concept of reflection${sup("5")}&nbsp; loss is defined by <span class="err">Eqs</span>. 1`, "just")}
        ${ln(html`and 2.${ret}`)}
      </p>
      ${eq1}${eq2}
      <p class="body">
        ${ln(html`where ${i("ν")} is frequency and ${i("c")} is the velocity of the wave in vacuum; ${i("ε")}${rM} and`, "just")}
        ${ln(html`${i("μ")}${rM} are the relative permittivity and permeability of the material being`, "just")}
        ${ln("measured, respectively, and they are independent on whether the sample", "just")}
        ${ln(html`is in donut shape or as a film; ${i("d")} is sample thickness of the measured`, "just")}
        ${ln(html`material shown in Fig. 1. <i>Z${sub("0")}</i> is the characteristic impedance of free space.${ret}`)}
      </p>
      ${figure}
    </article>`;
  }

  private pageTwo() {
    return html`<article class="page"><span class="crop l"></span><span class="crop r"></span>
      <p class="body mid">
        ${ln(html`reflected, back and forth, between the two interfaces at ${x1} and ${x1} + ${i("d")} in`)}
        ${ln("the material. Transmissions at both interfaces also occur. All the")}
        ${ln(html`transmitted waves at ${x1m} have been added into the reflected wave at ${x1m} for`)}
        ${ln(html`${i("Γ")}(${x1m}). ${i("Γ")}(${x1m}) is the reflection coefficient at ${x1m}. The superscripts + and –`)}
        ${ln(html`indicate immediate left and right, respectively, at a position.${ret}`)}
      </p>
      <p class="blank">${ret}&nbsp;</p>
      <p class="compact">${ln(html`If ${zin} in Eq. 1 is the input impedance at ${x1m} in Fig. 1, then ${i("RL")} represents the`)}${ln(html`negative of return loss defined in transmission-line theory. However, ${zin}`)}${ln(html`defined in Eq. 2 is the input impedance at ${x1}${sup("+")} involving only the first two`)}${ln(html`beams <span class="gram">reflected back</span> and forth within the material between the two`)}${ln(html`interfaces in Fig. 1, and does not represent the input impedance at ${x1m}. It`)}${ln("should be noted that microwave circuits are analyzed by network analysis")}${ln(html`and measured with a network analyzer. Thus, if return loss is defined at${ret}`)}</p>
      <p class="refhead">References<span class="caret"></span>${ret}</p>
      <p class="blank s">${ret}&nbsp;</p>
      <p class="refs">
        ${ln(hl(html`${sup("1")}&nbsp; Y. Liu, K. Zhao, M. G. B. Drew, Y. Liu, A theoretical and practical clarification on the calculation of`))}
        ${ln(html`${hl("reflection loss for microwave absorbing materials, AIP Advances, 8 (2018) 015223")}${ret}`)}
        ${ln(hl(html`${sup("2")}&nbsp; An experimental and theoretical investigation into methods concerned with “reflection loss”&nbsp;`))}
        ${ln(hl(html`for microwave absorbing materials, Materials Chemistry and Physics,&nbsp;`))}
        ${ln(html`${hl("10.1016/j.matchemphys.2020.122624")}${ret}`)}
        ${ln(hl(html`${sup("3")}&nbsp; Y. Liu, M. G. B. Drew, Y. Liu, Characterization microwave absorption from active&nbsp;`))}
        ${ln(hl(html`carbon/BaSm${sub("x")}Fe${sub("12-x")}O${sub("19")}/<span class="err">polypyrrole</span> composites analyzed with a more rigorous method. Journal of`))}
        ${ln(html`${hl("Materials Science: Materials in Electronics, 30(2), (2019) 1936 – 1956")}${ret}`)}
        ${ln(hl(html`${sup("4")}&nbsp; K. Yang, Y. Liu, M. G. B. Drew, Y. Liu, Preparation and characterization of&nbsp;`))}
        ${ln(hl(html`BaSmxFe${sub("12-x")}O${sub("19")}/<span class="err">polypyrrole</span> composites, Journal of Materials Science: Materials in Electronics,&nbsp;`))}
        ${ln(html`${hl("29(15) (2018) 13148 – 13160")}${ret}`)}
      </p>
      <p class="tail">t${ret}</p>
    </article>`;
  }

  private status() {
    return html`<footer class="status row">
      <div class="left row"><span>第 2 页，共 2 页</span><span>299 个字</span>
        ${icon(14, 13, svg`<path d="M7.500 2.500q-1-2-3-2h-4v11h4q2 0 3 1zM9 .5h4.500M7.500 12.500q1-1 3-1h3M9 3.500l4 5M13 3.500l-4 5" stroke="#555"/>`)}
        <span>英语(美国)</span></div>
      <div class="right row">
        <button aria-label="阅读视图">${icon(14, 13, svg`<path d="M.5 1.500h5l1.500 1 1.500-1h5v9h-5l-1.500 2-1.500-2h-5zM7 2v10M2 4.500h3M2 6.500h3M2 8.500h3M9 4.500h3M9 6.500h3M9 8.500h3" stroke="#555"/>`)}</button>
        <button class="on" aria-label="页面视图">${icon(14, 13, svg`<path d="M.5.5h13v12H.5zM3 3.500h8M3 5.500h8M3 7.500h8M3 9.500h8" stroke="#555"/>`)}</button>
        <button aria-label="Web 版式视图">${icon(15, 14, svg`<path d="M6 11.500H.5v-11h12V6M3 3.500h7M3 5.500h5M3 7.500h3" stroke="#555"/><circle cx="10.500" cy="9.500" r="4" fill="#777"/><path d="M8 8l3 2-1 3M11 6l2 2" stroke="#eee"/>`)}</button>
        <button class="step" aria-label="缩小">${icon(7, 7, svg`<path d="M0 3.500h7" stroke="#555" stroke-width="2"/>`)}</button>
        <input class="range" type="range" min="10" max="190" value="100" aria-label="显示比例" />
        <button class="step" aria-label="放大">${icon(8, 8, svg`<path d="M0 4h8M4 0v8" stroke="#555" stroke-width="2"/>`)}</button>
        <span class="pct">100%</span>
      </div></footer>`;
  }

  private taskbar() {
    return html`<div class="taskbar row">
      <button class="start" aria-label="开始">${icon(16, 16, svg`<path d="M0 2.500l6.500-1v6H0zM7.500 1.300L16 0v7.500H7.500zM0 8.500h6.500v6l-6.500-1zM7.500 8.500H16V16l-8.500-1.300z" fill="#fff"/>`)}</button>
      <button class="start" aria-label="Cortana">${icon(18, 18, svg`<circle cx="8" cy="9" r="7" stroke="#fff" stroke-width="2"/>`)}</button>
      <button class="start" aria-label="助手">${icon(22, 22, svg`<g fill="#dedede"><rect x="0" y="0" width="10.500" height="10.500" rx="5"/><rect x="11.500" y="0" width="10.500" height="10.500" rx="5"/><rect x="0" y="11.500" width="10.500" height="10.500" rx="5"/><rect x="11.500" y="11.500" width="10.500" height="10.500" rx="5"/><path d="M5 5h12v12H5z"/></g><path d="M11 0q-4 5 0 11 4 6 0 11M0 11q5 4 11 0 6-4 11 0" stroke="#15191f" stroke-width="1.300"/>`)}</button>
      <div class="search">${icon(24, 24, ieShape("#1590f5", "#1590f5"))}<input aria-label="搜索" value="游戏 下载" /><button>搜索一下</button></div>
      ${apps.map((a) => html`<button class=${classMap({ app: true, open: !!a.open, active: !!a.active })} aria-label=${a.name}>${a.pic}</button>`)}
      <div class="tray row"><div class="icons row">${tray}</div>
        <span class="ime row">英${icon(14, 14, svg`<path d="M0 0h14v14H0z" fill="#fff"/><path d="M3 12V3l4 6 4-6v9" stroke="#111" stroke-width="2"/>`)}</span>
        <div class="clock">16:30<br />2020/2/22</div>
        <button class="notif" aria-label="通知">${icon(24, 24, svg`<path d="M2 2h16v12h-4l-4 4v-4H2z" fill="#fff"/><path d="M5 5.500h10M5 8h10M5 10.500h10" stroke="#111"/><circle cx="17" cy="16" r="7" fill="#333" stroke="#666"/><path d="M15.500 14l2-1.500V20" stroke="#fff" stroke-width="1.500"/>`)}</button>
      </div>
      <div class="water">https://blog.csdn.net/ly15840435786</div>
    </div>`;
  }

  render() {
    const nums = ["8", "6", "4", "2", "", ...Array.from({ length: 24 }, (_, k) => String(2 * k + 2))];
    return html`${this.header()}${this.ribbon()}
      <main class="work">
        <div class="corner"><button aria-label="制表符">${icon(8, 8, svg`<path d="M2 0v7h6" stroke="#555" stroke-width="2"/>`)}</button></div>
        <div class="spread"><div class="hruler"><div class="nums">${nums.map((n) => html`<span>${n}</span>`)}</div>
          ${icon(11, 29, svg`<path d="M.5.5h10v6l-5 5-5-5zM.5 21.500v-5l5-5 5 5v5zM.5 21.500h10v6H.5z" fill="#fff" stroke="#888"/>`, "pin")}
          ${icon(11, 12, svg`<path d="M.5 10.500v-5l5-5 5 5v5z" fill="#fff" stroke="#888"/>`, "pin right")}</div></div>
        <div class="scroll"><button aria-label="向上">${icon(8, 4, svg`<path d="M0 4l4-4 4 4z" fill="#ccc"/>`)}</button><div></div><button aria-label="向下">${icon(8, 4, svg`<path d="M0 0l4 4 4-4z" fill="#ccc"/>`)}</button></div>
        <div class="vruler">${this.vruler()}</div>
        <div class="spread">${this.pageOne()}${this.pageTwo()}</div>
      </main>
      ${this.status()}${this.taskbar()}
      <aside class="meter"><div class="ball">77%</div><div class="pill">
        <div class="rates">${icon(6, 8, svg`<path d="M3 8V2M.5 4L3 1l2.500 3" stroke="#e8573a" stroke-width="1.600"/>`)}<span>0.09K/s</span>${icon(6, 8, svg`<path d="M3 0v6M.5 4L3 7l2.500-3" stroke="#1f9a4c" stroke-width="1.600"/>`)}<span>32.6K/s</span></div>
        <button aria-label="加速">${icon(19, 20, svg`<circle cx="9" cy="11" r="8" fill="#3b7fe0" stroke="#9db8dc"/><path d="M9 7v8M5 11h8" stroke="#fff" stroke-width="2"/><circle cx="15" cy="5" r="3.500" fill="#dd3a3a" stroke="#b02020"/>`)}</button>
      </div></aside>`;
  }
}
